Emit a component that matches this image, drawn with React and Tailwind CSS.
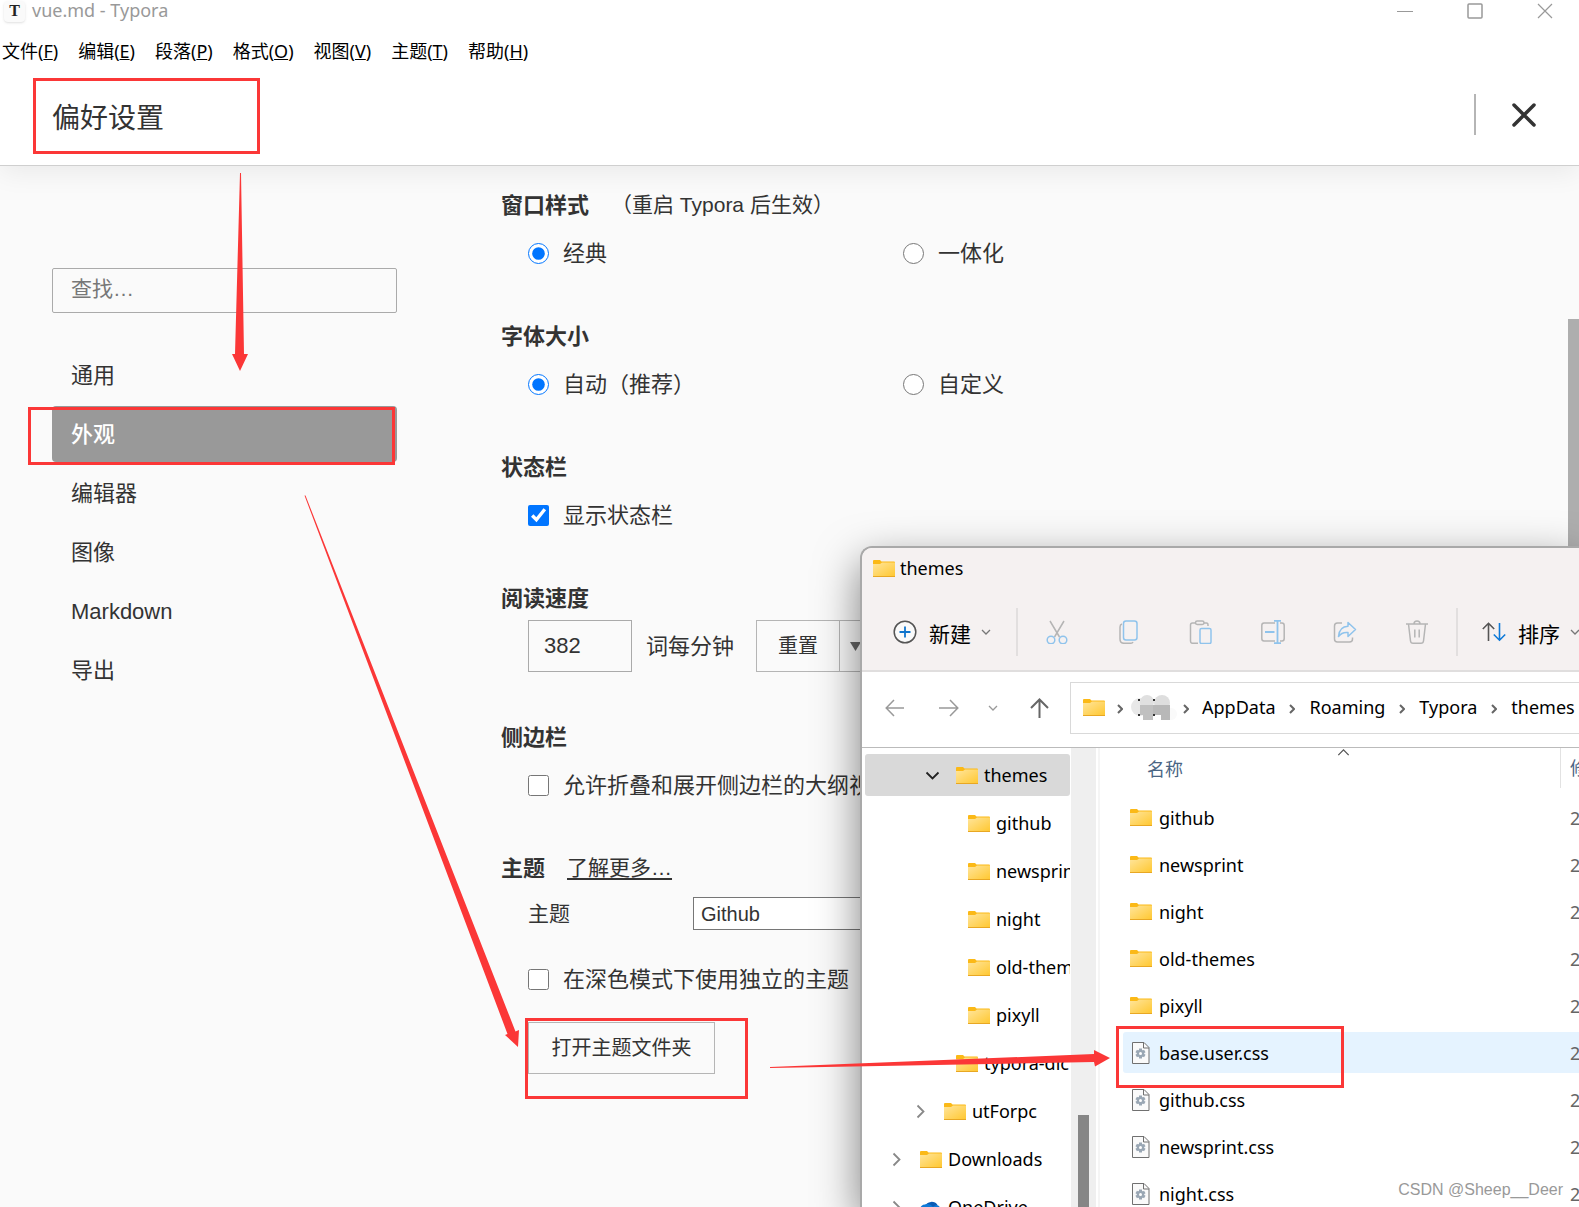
import React, { useState } from 'react';

const menus = [
  ['文件', 'F'],
  ['编辑', 'E'],
  ['段落', 'P'],
  ['格式', 'O'],
  ['视图', 'V'],
  ['主题', 'T'],
  ['帮助', 'H'],
];

const tabs = ['通用', '外观', '编辑器', '图像', 'Markdown', '导出'];

const tree = [
  { name: 'themes', indent: 'pl-[61px]', arrow: 'down', selected: true },
  { name: 'github', indent: 'pl-[73px]' },
  { name: 'newsprint', indent: 'pl-[73px]' },
  { name: 'night', indent: 'pl-[73px]' },
  { name: 'old-themes', indent: 'pl-[73px]' },
  { name: 'pixyll', indent: 'pl-[73px]' },
  { name: 'typora-dict', indent: 'pl-[61px]' },
  { name: 'utForpc', indent: 'pl-[49px]', arrow: 'right' },
  { name: 'Downloads', indent: 'pl-[25px]', arrow: 'right' },
  { name: 'OneDrive', indent: 'pl-[25px]', arrow: 'right', cloud: true },
];

const files = [
  { name: 'github', folder: true },
  { name: 'newsprint', folder: true },
  { name: 'night', folder: true },
  { name: 'old-themes', folder: true },
  { name: 'pixyll', folder: true },
  { name: 'base.user.css', selected: true },
  { name: 'github.css' },
  { name: 'newsprint.css' },
  { name: 'night.css' },
];

const FolderIcon = () => (
  <svg width="22" height="17" viewBox="0 0 22 17" className="shrink-0">
    <defs>
      <linearGradient id="folderFill" x1="0" y1="0" x2="1" y2="1">
        <stop offset="0" stopColor="#ffe59c" />
        <stop offset="1" stopColor="#ffc832" />
      </linearGradient>
    </defs>
    <path d="M0 1a1 1 0 0 1 1-1h6l1.500 1.500H21a1 1 0 0 1 1 1V5H0z" fill="#fbb917" />
    <path d="M0 4h7l2-1.500h13V16H0z" fill="url(#folderFill)" />
    <path d="M0 16h22v1H0z" fill="#e8a723" />
  </svg>
);

const FileIcon = () => (
  <svg width="18" height="22" viewBox="0 0 18 22" className="shrink-0">
    <path d="M.5.5h11.5l5 5v16H.5z" fill="#fafafa" stroke="#707070" />
    <path d="M11.500.5v5.500h5.500" fill="none" stroke="#707070" />
    <g stroke="#9aa7b4" strokeWidth="3">
      <path d="M8.500 6.500v10M4.200 9l8.600 5M12.800 9l-8.600 5" />
    </g>
    <circle cx="8.500" cy="11.500" r="3.700" fill="#9aa7b4" />
    <circle cx="8.500" cy="11.500" r="1.500" fill="#fff" />
  </svg>
);

const CloudIcon = () => (
  <svg width="22" height="15" viewBox="0 0 22 15" className="shrink-0">
    <path d="M5 6a7 6.500 0 0 1 12.500-1l-6 7z" fill="#0a5bb5" />
    <path d="M5 4.500A5 5 0 0 0 5 14.500h12a5 5 0 0 0 0-9.500c-2 0-3 1-4 2C11 4.500 8 3.500 5 4.500z" fill="#0f7ad8" />
  </svg>
);

const Chevron = ({ dir, size = 10, color = '#777', width = 1.3 }) => {
  const paths = {
    down: 'M1 3l4 4 4-4',
    right: 'M3 1l4 4-4 4',
    up: 'M1 7l4-4 4 4',
  };
  return (
    <svg width={size} height={size} viewBox="0 0 10 10" fill="none" stroke={color} strokeWidth={width} className="shrink-0">
      <path d={paths[dir]} />
    </svg>
  );
};

const CrumbArrow = () => (
  <svg width="6" height="10" viewBox="0 0 6 10" fill="none" stroke="#666" strokeWidth="2" className="mt-1 shrink-0">
    <path d="M1 1l4 4-4 4" />
  </svg>
);

const toolIcons = [
  {
    label: '剪切',
    body: (
      <>
        <path d="M5 1l9.500 16M19 1L9.500 17" stroke="#b5b5b5" />
        <circle cx="6" cy="20" r="3.800" stroke="#8fc3ec" />
        <circle cx="18" cy="20" r="3.800" stroke="#8fc3ec" />
      </>
    ),
  },
  {
    label: '复制',
    body: (
      <>
        <path d="M5 4c-1.500.5-2 1.500-2 3v12c0 3 1.500 4.300 4 4.300h6c1.500 0 2.500-.3 3-1.300" stroke="#b5b5b5" />
        <rect x="6.500" y="1" width="13.500" height="19" rx="2.500" stroke="#8fc3ec" />
      </>
    ),
  },
  {
    label: '粘贴',
    body: (
      <>
        <path d="M7 3H3.500C2 3 1.500 3.800 1.500 5v16c0 1.500.8 2.300 2 2.300H9M15 3h2.500c1 0 1.500.8 1.500 2v1" stroke="#b5b5b5" />
        <rect x="6.500" y="1" width="8.500" height="3.500" rx="1.700" stroke="#b5b5b5" />
        <rect x="11" y="8.500" width="11" height="15" rx="1.500" stroke="#8fc3ec" />
      </>
    ),
  },
  {
    label: '重命名',
    body: (
      <>
        <path d="M14 3H3C1.500 3 .8 4 .8 5.500v13c0 1.500.7 2.500 2.200 2.500h11M19 3h2c1.500 0 2.200 1 2.200 2.500v13c0 1.500-.7 2.500-2.200 2.500h-2" stroke="#b5b5b5" />
        <path d="M13 .8h7M13 23.200h7M16.500 1v22M4 12h9.500" stroke="#8fc3ec" strokeWidth="1.800" />
      </>
    ),
  },
  {
    label: '共享',
    body: (
      <>
        <path d="M9 3H4.500C2.500 3 1.500 4 1.500 6v13c0 2 1 3 3 3h12c2 0 3-1 3-3v-1.500" stroke="#b5b5b5" />
        <path d="M15 2.500l7.500 7-7.500 7v-4c-4-.5-7 .5-9.500 4C6 11 9 6.500 15 6.300z" stroke="#8fc3ec" strokeLinejoin="round" />
      </>
    ),
  },
  {
    label: '删除',
    body: (
      <>
        <path d="M1 4h22M3.500 4l2 17c.2 1.500 1 2.200 2.500 2.200h8c1.500 0 2.300-.7 2.500-2.200l2-17M9 4c0-4 6-4 6 0M9.800 9.500v8M14.200 9.500v8" stroke="#b5b5b5" />
      </>
    ),
  },
];

const Heading = ({ children }) => (
  <h2 className="h-8 flex items-center text-[22px] font-bold">{children}</h2>
);

const Radio = ({ name, label, defaultChecked }) => (
  <label className="w-[375px] h-9 flex items-center gap-[14px]">
    <input type="radio" name={name} defaultChecked={defaultChecked} className="w-[21px] h-[21px] accent-[#0075ff]" />
    {label}
  </label>
);

const Checkbox = ({ label, defaultChecked }) => (
  <label className="h-9 flex items-center gap-[14px] whitespace-nowrap">
    <input type="checkbox" defaultChecked={defaultChecked} className="w-[21px] h-[21px] accent-[#0075ff]" />
    {label}
  </label>
);

const TitleBar = () => (
  <div className="h-[22px] flex items-center justify-between pl-1 pr-[26px] font-['Noto_Sans','Noto_Sans_CJK_SC',sans-serif] text-[#999]">
    <div className="flex items-center gap-[7px]">
      <span className="w-[21px] h-[21px] flex items-center justify-center rounded bg-[#fafafa] shadow text-[#222] text-[16px] font-bold font-['Liberation_Serif',serif]">T</span>
      <span className="pb-0.5 text-[18px] leading-5">vue.md - Typora</span>
    </div>
    <div className="flex items-center gap-[54px]">
      <button aria-label="最小化">
        <svg width="16" height="16" viewBox="0 0 16 16" stroke="#999"><path d="M0 8.500h16" /></svg>
      </button>
      <button aria-label="最大化">
        <svg width="16" height="16" viewBox="0 0 16 16" fill="none" stroke="#999" strokeWidth="1.500"><rect x="1" y="1" width="14" height="14" rx="1" /></svg>
      </button>
      <button aria-label="关闭窗口">
        <svg width="16" height="16" viewBox="0 0 16 16" stroke="#999" strokeWidth="1.200"><path d="M1 1l14 14M15 1L1 15" /></svg>
      </button>
    </div>
  </div>
);

const Sidebar = () => {
  const [active, setActive] = useState('外观');

  return (
    <aside className="w-[345px] ml-[52px] mt-[102px] shrink-0">
      <input type="text" aria-label="查找" placeholder="查找…" className="w-full h-[45px] px-[18px] pb-1 border border-[#aaa] rounded-xs text-[21px] placeholder:text-[#777]" />
      <nav className="mt-[34px] flex flex-col gap-[3px]">
        {tabs.map((tab) => (
          <button
            key={tab}
            onClick={() => setActive(tab)}
            className={`h-14 px-[19px] text-left rounded-sm ${tab === active ? 'bg-[#999] text-white font-medium' : ''}`}
          >
            {tab}
          </button>
        ))}
      </nav>
    </aside>
  );
};

const Preferences = () => (
  <main className="ml-[104px] pt-[23px] flex-1 min-w-0 flex flex-col gap-[49px] text-[#333]">
    <section>
      <div className="flex items-center gap-[22px]">
        <Heading>窗口样式</Heading>
        <span className="text-[21px]">（重启 Typora 后生效）</span>
      </div>
      <div className="flex mt-[14px] pl-[27px]">
        <Radio name="frame" label="经典" defaultChecked />
        <Radio name="frame" label="一体化" />
      </div>
    </section>

    <section>
      <Heading>字体大小</Heading>
      <div className="flex mt-[14px] pl-[27px]">
        <Radio name="size" label="自动（推荐）" defaultChecked />
        <Radio name="size" label="自定义" />
      </div>
    </section>

    <section>
      <Heading>状态栏</Heading>
      <div className="mt-[14px] pl-[27px]">
        <Checkbox label="显示状态栏" defaultChecked />
      </div>
    </section>

    <section>
      <Heading>阅读速度</Heading>
      <div className="flex items-center mt-1.5 pl-[27px]">
        <input id="speed" type="text" defaultValue="382" className="w-[104px] h-[52px] px-[15px] border border-[#aaa]" />
        <label htmlFor="speed" className="ml-[14px]">词每分钟</label>
        <button className="ml-[22px] w-[84px] h-[52px] border border-[#b5b5b5] text-[20px]">重置</button>
        <button aria-label="更多" className="w-[40px] h-[52px] pl-[10px] border border-l-0 border-[#b5b5b5]">
          <svg width="11" height="9" viewBox="0 0 11 9"><path d="M0 0h11L5.500 9z" fill="#666" /></svg>
        </button>
      </div>
    </section>

    <section>
      <Heading>侧边栏</Heading>
      <div className="mt-[14px] pl-[27px]">
        <Checkbox label="允许折叠和展开侧边栏的大纲视图" />
      </div>
    </section>

    <section>
      <div className="flex items-center gap-[22px]">
        <Heading>主题</Heading>
        <a href="#themes" className="text-[21px] underline underline-offset-3">了解更多…</a>
      </div>
      <div className="flex items-center mt-[13px] pl-[27px]">
        <label htmlFor="theme" className="w-[165px] text-[21px]">主题</label>
        <select id="theme" className="w-[260px] h-[33px] px-[7px] appearance-none bg-white border border-[#767676] text-[20px] leading-6">
          <option>Github</option>
        </select>
      </div>
      <div className="mt-[31px] pl-[27px]">
        <Checkbox label="在深色模式下使用独立的主题" />
      </div>
      <button className="ml-[27px] mt-[25px] w-[187px] h-[52px] border border-[#b5b5b5] text-[20px]">打开主题文件夹</button>
    </section>
  </main>
);

const Explorer = () => (
  <div className="absolute left-[860px] top-[546px] right-0 bottom-0 flex flex-col overflow-hidden border-l-2 border-t-2 border-[#a9a9a9] rounded-tl-[12px] bg-white shadow-[0_16px_44px_rgba(0,0,0,0.5)] text-black text-[18px] whitespace-nowrap font-['Noto_Sans','Noto_Sans_CJK_SC',sans-serif]">
    <div className="h-[46px] pb-1.5 pl-[11px] flex items-center gap-[5px] bg-[#f5f1f1] shrink-0">
      <FolderIcon />
      themes
    </div>

    <div className="h-[78px] flex items-center bg-[#f5f1f1] border-b-2 border-[#e0dede] shrink-0">
      <button className="ml-[31px] flex items-center shrink-0 text-[21px]">
        <svg width="24" height="24" viewBox="0 0 24 24" fill="none" strokeWidth="1.500">
          <circle cx="12" cy="12" r="10.800" fill="#fafafa" stroke="#555" />
          <path d="M12 6.500v11M6.500 12h11" stroke="#0f74cc" strokeWidth="1.800" />
        </svg>
        <span className="ml-3 mr-[10px] pt-1.5">新建</span>
        <Chevron dir="down" />
      </button>
      <span className="ml-[25px] mr-[3px] w-0.5 h-12 bg-[#e2dfdf] shrink-0" />
      {toolIcons.map((icon) => (
        <button key={icon.label} aria-label={icon.label} className="w-[72px] flex justify-center shrink-0">
          <svg width="24" height="24" viewBox="0 0 24 24" fill="none" strokeWidth="1.500">{icon.body}</svg>
        </button>
      ))}
      <span className="ml-[3px] w-0.5 h-12 bg-[#e2dfdf] shrink-0" />
      <button className="ml-6 flex items-center shrink-0 text-[21px]">
        <svg width="24" height="20" viewBox="0 0 24 20" fill="none" strokeWidth="1.600">
          <path d="M6.500 19V1.500M.8 7l5.700-5.700L12.200 7" stroke="#555" />
          <path d="M17.500 1v17.500M11.800 12.500l5.700 5.700 5.700-5.700" stroke="#0f7ad8" />
        </svg>
        <span className="ml-3 mr-[10px] pt-1.5">排序</span>
        <Chevron dir="down" />
      </button>
    </div>

    <div className="h-[76px] pt-[10px] pl-[23px] flex items-start border-b border-[#bbb] shrink-0">
      <div className="h-[52px] flex items-center shrink-0">
        <button aria-label="后退" className="mr-[34px]">
          <svg width="20" height="18" viewBox="0 0 20 18" fill="none" stroke="#999" strokeWidth="1.500"><path d="M19 9H1.500M9 1L1.200 9 9 17" /></svg>
        </button>
        <button aria-label="前进" className="mr-[29px]">
          <svg width="20" height="18" viewBox="0 0 20 18" fill="none" stroke="#999" strokeWidth="1.500"><path d="M0 9h18.500M11 1l7.800 8L11 17" /></svg>
        </button>
        <button aria-label="最近位置" className="mr-8">
          <Chevron dir="down" color="#999" />
        </button>
        <button aria-label="上移">
          <svg width="19" height="20" viewBox="0 0 19 20" fill="none" stroke="#666" strokeWidth="2"><path d="M9.500 20V1.500M1 10l8.500-8.500L18 10" /></svg>
        </button>
      </div>
      <div className="ml-[21px] flex-1 h-[52px] pb-0.5 pl-3 flex items-center border border-r-0 border-[#d9d9d9] overflow-hidden">
        <FolderIcon />
        <span className="w-3 shrink-0" />
        <CrumbArrow />
        <svg width="46" height="28" viewBox="0 0 46 28" className="ml-2 mr-1.5 shrink-0">
          <circle cx="9" cy="14" r="9" fill="#e8e8e8" />
          <circle cx="16" cy="9" r="7" fill="#e0e0e0" />
          <circle cx="31" cy="10" r="8" fill="#dedede" />
          <circle cx="40" cy="21" r="6" fill="#fafafa" />
          <path d="M9 12h21v10h-8v5H12v-5H9z" fill="#c0c0c0" />
          <path d="M22 12h17v15h-9v-5h-8z" fill="#b8b8b8" />
          <path d="M7 7h2M22 7h2M7 22h2M22 22h2" stroke="#333" strokeWidth="2" />
        </svg>
        <CrumbArrow />
        <span className="ml-[13px]">AppData</span>
        {['Roaming', 'Typora', 'themes'].map((crumb) => (
          <span key={crumb} className="ml-[14px] flex items-center gap-[14px]">
            <CrumbArrow />
            {crumb}
          </span>
        ))}
      </div>
    </div>

    <div className="flex flex-1 min-h-0">
      <ul className="w-[209px] pt-1.5 pl-[3px] flex flex-col gap-1.5 overflow-hidden shrink-0">
        {tree.map((node) => (
          <li key={node.name} className={`w-[205px] h-[42px] flex items-center shrink-0 overflow-hidden rounded-[3px] ${node.indent} ${node.selected ? 'bg-[#d9d9d9]' : ''}`}>
            <span className="w-[13px] mr-[17px] flex justify-center shrink-0">
              {node.arrow && <Chevron dir={node.arrow} size={15} color={node.selected ? '#222' : '#888'} width={1.2} />}
            </span>
            {node.cloud ? <CloudIcon /> : <FolderIcon />}
            <span className="ml-1.5">{node.name}</span>
          </li>
        ))}
      </ul>
      <div className="w-[25px] bg-[#efefef] flex flex-col items-center justify-end shrink-0">
        <div className="w-[11px] h-[92px] bg-[#868686]" />
      </div>
      <div className="ml-0.5 w-0.5 bg-[#f5f5f5] shrink-0" />
      <div className="relative flex-1 pl-[23px] overflow-hidden">
        <span className="absolute -top-0.5 inset-x-0 pl-2 flex justify-center">
          <Chevron dir="up" size={13} color="#555" width={1} />
        </span>
        <table className="w-full table-fixed text-left">
          <thead>
            <tr className="h-[46px] text-[#4a6584]">
              <th className="pl-6 pb-1 font-normal">名称</th>
              <th className="w-[19px] p-0 align-top">
                <div className="h-10 pl-[9px] flex items-center overflow-hidden border-l border-[#e2e2e2] font-normal">修改日期</div>
              </th>
            </tr>
          </thead>
          <tbody>
            {files.map((file) => (
              <tr key={file.name} className="h-[47px]">
                <td className="p-0">
                  <div className={`h-[41px] flex items-center rounded-l-[3px] ${file.folder ? 'pl-[7px] gap-[7px]' : 'pl-[9px] gap-[9px]'} ${file.selected ? 'bg-[#e5f3ff]' : ''}`}>
                    {file.folder ? <FolderIcon /> : <FileIcon />}
                    <span className="pt-0.5">{file.name}</span>
                  </div>
                </td>
                <td className="p-0">
                  <div className={`h-[41px] pl-[10px] flex items-center overflow-hidden text-[#666] ${file.selected ? 'bg-[#e5f3ff]' : ''}`}>
                    <span className="pt-0.5">2022</span>
                  </div>
                </td>
              </tr>
            ))}
          </tbody>
        </table>
      </div>
    </div>
  </div>
);

// red boxes and arrows drawn on top of the windows
const Annotations = () => (
  <div className="absolute inset-0 pointer-events-none">
    <div className="absolute left-[33px] top-[78px] w-[227px] h-[76px] border-3 border-[#fb3737]" />
    <div className="absolute left-[28px] top-[407px] w-[367px] h-[58px] border-3 border-[#fb3737]" />
    <div className="absolute left-[525px] top-[1018px] w-[223px] h-[81px] border-3 border-[#fb3737]" />
    <div className="absolute left-[1116px] top-[1026px] w-[228px] h-[62px] border-3 border-[#fb3737]" />
    <svg width="1120" height="1100" viewBox="0 0 1120 1100" fill="#fb3737" className="absolute left-0 top-0">
      <path d="M240 173h1l3 181h4l-8 17-8-17h3z" />
      <path d="M304.500 495.500h1L515.500 1031.500 519 1030 518 1047 505 1035 507.500 1034z" />
      <path d="M770 1067v1L1094 1062 1095 1066.500 1110 1058 1094 1050 1094 1054z" />
    </svg>
  </div>
);

const App = () => {
  return (
    <div className="relative h-screen overflow-hidden flex flex-col bg-[#fafafa] text-[22px] text-[#333] font-['Liberation_Sans','Noto_Sans_CJK_SC',sans-serif]">
      <header className="relative bg-white border-b border-[#cfcfcf] shadow-[0_6px_26px_rgba(0,0,0,0.07)] shrink-0">
        <TitleBar />
        <div className="h-14 pt-0.5 pl-0.5 flex items-center gap-5 text-[18px] text-black font-['Noto_Sans','Noto_Sans_CJK_SC',sans-serif]">
          {menus.map(([label, key]) => (
            <button key={key}>{label}(<u>{key}</u>)</button>
          ))}
        </div>
        <div className="h-[87px] pb-[14px] pl-[52px] pr-[43px] flex items-center">
          <h1 className="pt-2 text-[28px]">偏好设置</h1>
          <span className="ml-auto mr-[36px] w-0.5 h-[41px] bg-[#b5b5b5]" />
          <button aria-label="关闭">
            <svg width="24" height="24" viewBox="0 0 24 24" stroke="#333" strokeWidth="3.500" strokeLinecap="round"><path d="M2 2l20 20M22 2L2 22" /></svg>
          </button>
        </div>
      </header>

      <div className="flex flex-1 min-h-0">
        <Sidebar />
        <Preferences />
      </div>

      <div className="absolute right-0 top-[319px] w-[11px] h-[400px] bg-[#aeaeae]" />
      <Explorer />
      <Annotations />
      <span className="absolute right-4 bottom-[5px] text-[16px] text-[#999] [text-shadow:1px_1px_0_#fff]">CSDN @Sheep__Deer</span>
    </div>
  );
};

export default App;
